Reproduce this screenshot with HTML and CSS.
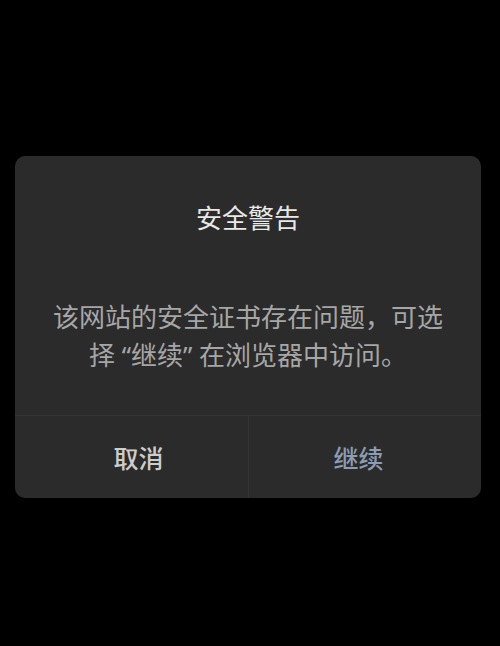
FILE: index.html
```html
<!DOCTYPE html>
<html lang="zh-CN">
<head>
    <meta charset="UTF-8">
    <meta name="viewport" content="width=device-width, initial-scale=1.0">
    <title>安全警告</title>
    <link rel="stylesheet" href="styles.css">
</head>
<body>

    <div class="dialog">
        <div class="dialog-body">
            <h2 class="dialog-title">安全警告</h2>
            <p class="dialog-text">该网站的安全证书存在问题，可选择 “继续” 在浏览器中访问。</p>
        </div>
        <div class="dialog-actions">
            <button type="button" class="btn btn-cancel">取消</button>
            <button type="button" class="btn btn-continue">继续</button>
        </div>
    </div>

</body>
</html>
```

FILE: styles.css
```css
body {
    margin: 0;
    height: 646px;
    background-color: #000;
    font-family: "Noto Sans", "Noto Sans CJK SC", sans-serif;
    overflow: hidden;
}

.dialog {
    margin: 156px 0 0 15px;
    width: 466px;
    background-color: #2b2b2b;
    border-radius: 10px;
    overflow: hidden;
}

.dialog-body {
    padding: 44px 30px 41px;
    text-align: center;
}

.dialog-title {
    margin: 0;
    font-size: 26px;
    font-weight: 400;
    line-height: 36px;
    color: #e8e8e8;
}

.dialog-text {
    margin: 62px 0 0;
    font-size: 26px;
    line-height: 38px;
    color: #a6a6a6;
}

.dialog-actions {
    display: flex;
    border-top: 1px solid #343434;
}

.btn {
    flex: 1;
    height: 82px;
    background: none;
    border: none;
    padding: 0;
    font-family: inherit;
    font-size: 25px;
    font-weight: 500;
    cursor: pointer;
}

.btn-cancel {
    padding-left: 14px;
    color: #cdcdcd;
    border-right: 1px solid #343434;
}

.btn-continue {
    padding-right: 13px;
    color: #8c9cb4;
}
```
